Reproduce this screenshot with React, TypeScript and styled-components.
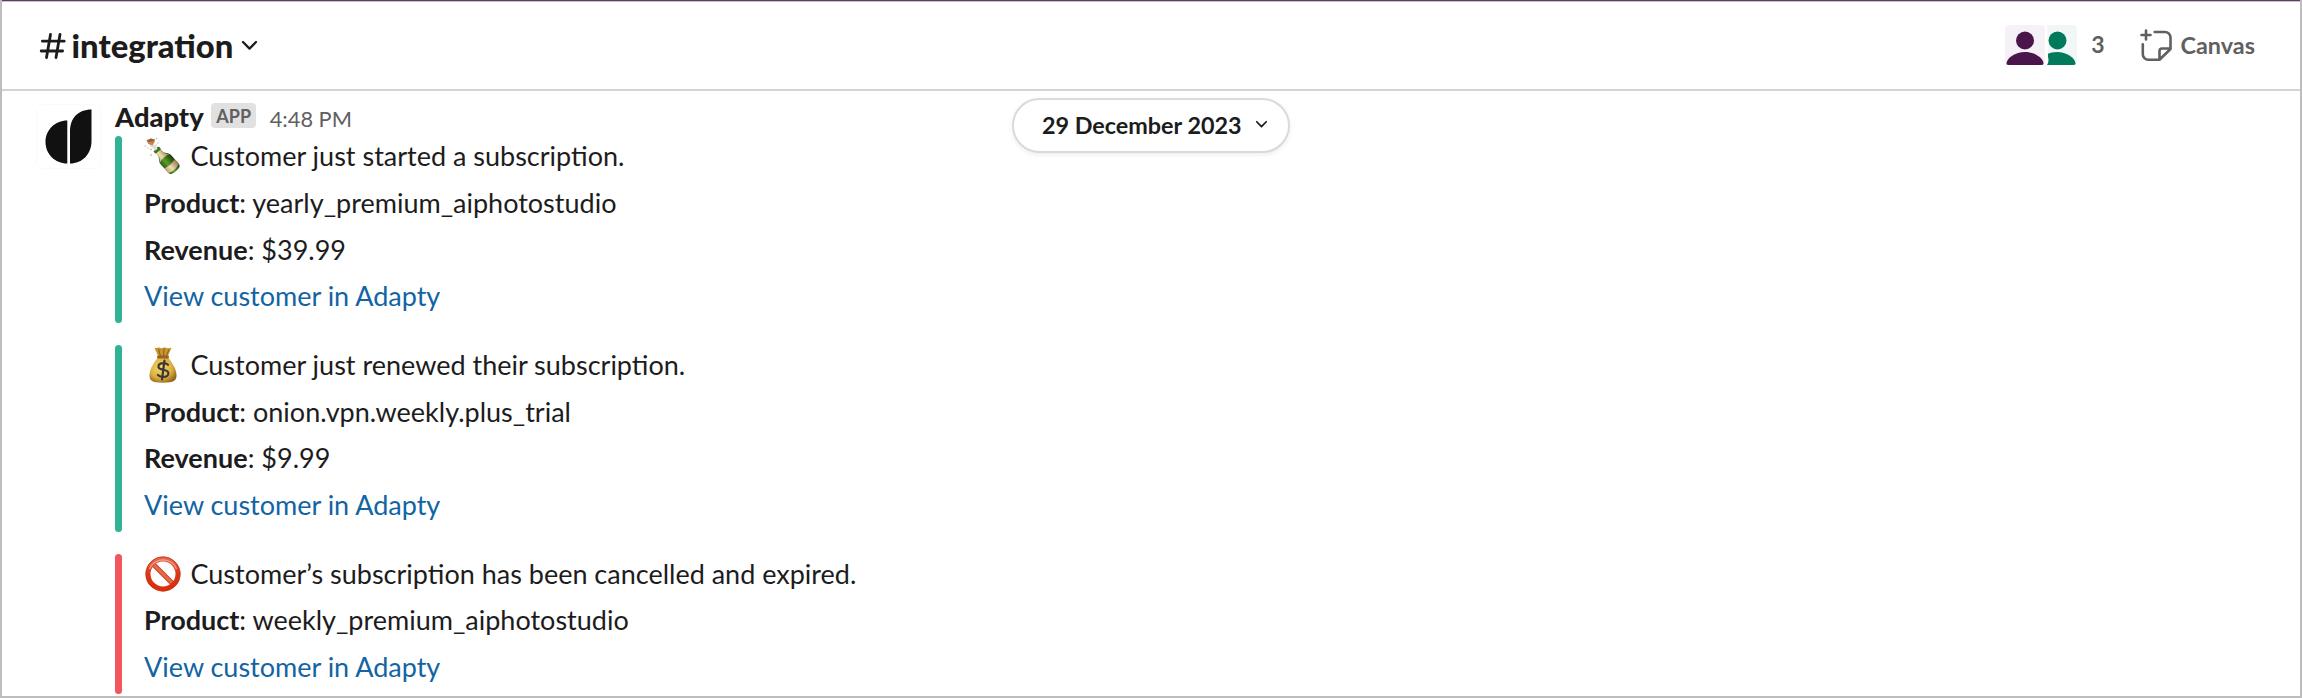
import React from "react";
import styled, { createGlobalStyle } from "styled-components";

const GlobalStyle = createGlobalStyle`
  *, *::before, *::after { box-sizing: border-box; }
  body { margin: 0; background: #fff; }
`;

const Window = styled.div`
  position: relative;
  display: flex;
  flex-direction: column;
  width: 2302px;
  height: 698px;
  overflow: hidden;
  border: 2px solid #bdbdbd;
  border-top: 0;
  background: #fff;
  color: #1d1c1d;
  font-family: Lato, "Liberation Sans", sans-serif;
`;

const TopEdge = styled.div`
  flex: none;
  height: 2px;
  margin: 0 -2px;
  background: linear-gradient(#5b3f5c 0 1px, #cabfcb 1px 2px);
`;

const Header = styled.header`
  flex: none;
  display: flex;
  align-items: center;
  justify-content: space-between;
  height: 89px;
  padding: 0 45px 0 37px;
  border-bottom: 2px solid #d4d4d4;
`;

const ChannelTitle = styled.h1`
  display: flex;
  align-items: center;
  margin: 0;
  font-size: 32.8px;
  font-weight: 900;
  line-height: 40px;
`;

const HashIcon = styled.svg`
  width: 27px;
  height: 28px;
  margin: 1px 5.5px 0 0;
`;

const Chevron = styled.svg<{ $width: number; $gap: number }>`
  width: ${(p) => p.$width}px;
  height: ${(p) => p.$width * 0.6}px;
  margin-left: ${(p) => p.$gap}px;
  overflow: visible;
`;

const HeaderActions = styled.div`
  display: flex;
  align-items: center;
  color: #616061;
`;

const AvatarStack = styled.svg`
  width: 72px;
  height: 40px;
  margin-top: -1px;
`;

const MemberCount = styled.span`
  margin: -3px 0 0 14px;
  font-size: 23px;
  font-weight: 700;
  line-height: 30px;
`;

const CanvasIcon = styled.svg`
  width: 32px;
  height: 32px;
  margin: -1px 0 0 35px;
`;

const CanvasLabel = styled.span`
  margin: -2px 0 0 9px;
  font-size: 23.4px;
  font-weight: 700;
  line-height: 30px;
`;

const DatePill = styled.button`
  position: absolute;
  top: 98px;
  left: 1010px;
  display: flex;
  align-items: center;
  width: 278px;
  height: 55px;
  padding: 0 0 2px 28px;
  border: 2px solid #dadada;
  border-radius: 28px;
  background: #fff;
  box-shadow: 0 2px 5px rgba(0, 0, 0, 0.07);
  color: #1d1c1d;
  font: 700 23.35px/30px Lato, sans-serif;
`;

const Message = styled.article`
  display: flex;
  padding: 11px 0 0 34px;
`;

const AppAvatar = styled.svg`
  flex: none;
  width: 65px;
  height: 65px;
  margin-top: 2px;
`;

const MessageBody = styled.div`
  padding-left: 14px;
`;

const MessageMeta = styled.div`
  display: flex;
  align-items: center;
  height: 34px;
`;

const Author = styled.span`
  margin-top: -4px;
  font-size: 27.3px;
  font-weight: 900;
  line-height: 34px;
`;

const AppBadge = styled.span`
  width: 45px;
  height: 25px;
  margin: -7px 0 0 7.500px;
  border-radius: 4px;
  background: #e1e1e1;
  color: #616061;
  font-size: 18px;
  font-weight: 700;
  line-height: 26px;
  text-align: center;
`;

const Time = styled.time`
  margin: 0 0 0 13.500px;
  color: #616061;
  font-size: 21.8px;
  line-height: 30px;
`;

const Attachments = styled.div`
  display: flex;
  flex-direction: column;
  gap: 22px;
`;

const Attachment = styled.section<{ $tone: string }>`
  display: flex;
  gap: 22px;

  &::before {
    content: "";
    width: 7px;
    border-radius: 4px;
    background: ${(p) => p.$tone};
  }
`;

const Lines = styled.div`
  display: flex;
  flex-direction: column;
`;

const Line = styled.div`
  display: flex;
  align-items: center;
  height: 46.7px;
  padding-bottom: 6.4px;
  font-size: 27px;
  line-height: 40px;
  white-space: pre;
`;

const Emoji = styled.svg`
  width: 38px;
  height: 38px;
  margin: 0 8.500px 0 0;
`;

const Link = styled.a`
  color: #1264a3;
  text-decoration: none;
`;

const GREEN = "#30b295";
const RED = "#f2555c";

type Kind = "bottle" | "money" | "prohibited";

const items: { kind: Kind; tone: string; title: string; product: string; revenue?: string }[] = [
  { kind: "bottle", tone: GREEN, title: "Customer just started a subscription.", product: "yearly_premium_aiphotostudio", revenue: "$39.99" },
  { kind: "money", tone: GREEN, title: "Customer just renewed their subscription.", product: "onion.vpn.weekly.plus_trial", revenue: "$9.99" },
  { kind: "prohibited", tone: RED, title: "Customer’s subscription has been cancelled and expired.", product: "weekly_premium_aiphotostudio" },
];

function Down({ width, gap }: { width: number; gap: number }) {
  return (
    <Chevron $width={width} $gap={gap} viewBox="0 0 15 9" fill="none" stroke="#1d1c1d" strokeWidth="2.3" strokeLinecap="round" strokeLinejoin="round">
      <path d="M1 1l6.5 6.6L14 1" />
    </Chevron>
  );
}

function BottleEmoji() {
  return (
    <Emoji viewBox="0 0 38 38">
      <defs>
        <linearGradient id="glass" x1="0" y1="0" x2="1" y2="0">
          <stop offset="0" stopColor="#2c5a14" />
          <stop offset=".4" stopColor="#5c9c2c" />
          <stop offset="1" stopColor="#16380a" />
        </linearGradient>
        <linearGradient id="foil" x1="0" y1="0" x2="1" y2="0">
          <stop offset="0" stopColor="#c3a673" />
          <stop offset=".4" stopColor="#efdcb2" />
          <stop offset="1" stopColor="#9a7c4a" />
        </linearGradient>
      </defs>
      <g transform="translate(14 14) rotate(-42)">
        <path d="M-3-3h6v6c0 3 4 5 4 9v11c0 3-2 4-7 4s-7-1-7-4V12c0-4 4-6 4-9z" fill="url(#glass)" />
        <path d="M-3-1h6v5c0 2.500 2 4 3.200 6-3-1.500-9.400-1.500-12.400 0 1.200-2 3.200-3.500 3.200-6z" fill="url(#foil)" />
        <path d="M-7 17c4 1.700 10 1.700 14 0v6.500c-4 1.800-10 1.800-14 0z" fill="url(#foil)" />
        <rect x="-3.700" y="-3" width="7.400" height="3.600" rx="1.200" fill="#39751b" />
      </g>
      <path d="M6 8l3-1 2 1 2-1-.5 3 1 2-3 2-1-3-3-1z" fill="#e2dfd5" />
      <path d="M2.500 3.500l4.500-2 4 1.200-.7 3-2 2.800-4-1.500z" fill="#c58655" />
      <path d="M2.500 3.500l4.500-2 4 1.200-2 1.500-4 .8z" fill="#9d6038" />
      <g fill="#c9bfae">
        <circle cx="1.500" cy="9" r=".8" /><circle cx="7" cy="12.500" r=".9" /><circle cx="12.500" cy="1.400" r=".8" />
        <circle cx="7" cy="18" r=".9" /><circle cx="14" cy="6" r=".7" /><circle cx="4" cy="11" r=".7" />
      </g>
    </Emoji>
  );
}

function MoneyEmoji() {
  return (
    <Emoji viewBox="0 0 38 38">
      <defs>
        <radialGradient id="sack" cx=".42" cy=".4" r=".65">
          <stop offset="0" stopColor="#f5d96a" />
          <stop offset=".65" stopColor="#dbb040" />
          <stop offset="1" stopColor="#94691d" />
        </radialGradient>
      </defs>
      <path d="M14 11.500h10c3 4 8 10 8.500 17 .3 6-2 8.200-13.500 8.200S5.200 34.500 5.500 28.500C6 21.500 11 15.500 14 11.500z" fill="url(#sack)" />
      <path d="M10.500 1.500c2 .8 3 .8 4.500-.2 2 1.200 3.500 1.200 5.500 0 2 1 4.500 1.200 7 .2-1 3.500-3 6-3.500 9.500H14c-.5-3.500-2.500-6-3.500-9.500z" fill="#c6962f" />
      <path d="M14.500 3l2 7M20 2.500l-.5 7.500M25 3.500L22.300 10" stroke="#87601c" strokeWidth="1" fill="none" />
      <rect x="13" y="9.500" width="12" height="3" rx="1.500" fill="#9a6120" />
      <path d="M24 18.800c-1.300-1.300-3-1.700-4.800-1.700-2.800 0-4.800 1.200-4.800 3.300 0 4.700 10 2 10 6.900 0 2.200-2 3.700-5.200 3.700-2 0-4-.7-5.300-2M20.500 14.500L18 33.500" fill="none" stroke="#3f3733" strokeWidth="2.200" strokeLinecap="round" />
    </Emoji>
  );
}

function ProhibitedEmoji() {
  return (
    <Emoji viewBox="0 0 38 38">
      <defs>
        <linearGradient id="ring" x1="0" y1="0" x2="0" y2="1">
          <stop offset="0" stopColor="#e5674b" />
          <stop offset=".5" stopColor="#dc3414" />
          <stop offset="1" stopColor="#d92f0c" />
        </linearGradient>
      </defs>
      <path d="M8.500 8.500l21 21" stroke="#cf3516" strokeWidth="4.800" />
      <path d="M8.500 8.500l21 21" stroke="#e86b50" strokeWidth="3" />
      <circle cx="19" cy="19" r="15" fill="none" stroke="url(#ring)" strokeWidth="5" />
      <circle cx="19" cy="19" r="17" fill="none" stroke="#c4371d" strokeWidth=".8" />
      <path d="M5.500 14a14.500 14.500 0 0 1 27 0" fill="none" stroke="#f3a591" strokeWidth="1.300" />
    </Emoji>
  );
}

const emojis = { bottle: BottleEmoji, money: MoneyEmoji, prohibited: ProhibitedEmoji };

export default function App() {
  return (
    <>
      <GlobalStyle />
      <Window>
        <TopEdge />
        <Header>
          <ChannelTitle>
            <HashIcon viewBox="0 0 27 28" fill="none" stroke="#1d1c1d" strokeWidth="2.8" strokeLinecap="round">
              <path d="M11.500 2.500L7.500 25.500M21 2.500L17 25.500M3.400 9.200h21.800M2.200 19h21.400" />
            </HashIcon>
            integration
            <Down width={15} gap={9} />
          </ChannelTitle>
          <HeaderActions>
            <AvatarStack viewBox="0 0 72 40">
              <defs>
                <clipPath id="front"><rect width="40" height="40" rx="4" /></clipPath>
                <clipPath id="back"><path d="M42 0h26a4 4 0 0 1 4 4v32a4 4 0 0 1-4 4H42c1.500-2 2-5 1-8z" /></clipPath>
              </defs>
              <g clipPath="url(#front)">
                <rect width="40" height="40" fill="#f6f1f6" />
                <circle cx="20" cy="15.500" r="9" fill="#4a154b" />
                <path d="M1.500 40c-1-6.500 8.500-13 18.500-13s19.500 6.500 18.500 13z" fill="#4a154b" />
              </g>
              <g clipPath="url(#back)">
                <rect x="32" width="40" height="40" fill="#f0f7f6" />
                <circle cx="52.500" cy="15.500" r="9" fill="#007a5a" />
                <path d="M33.500 40c-1-6.500 8.500-13 18.500-13s19.500 6.500 18.500 13z" fill="#007a5a" />
              </g>
            </AvatarStack>
            <MemberCount>3</MemberCount>
            <CanvasIcon viewBox="0 0 32 32" fill="none" stroke="#616061" strokeWidth="2.6" strokeLinecap="round" strokeLinejoin="round">
              <path d="M6 1.500v9M1.500 6h9M14.700 3H25a5.500 5.500 0 0 1 5.500 5.500V20L19.500 30.700H8.300a5.500 5.500 0 0 1-5.500-5.500V15.200M30.500 19.500H22a2.500 2.500 0 0 0-2.500 2.500v8.500" />
            </CanvasIcon>
            <CanvasLabel>Canvas</CanvasLabel>
          </HeaderActions>
        </Header>
        <Message>
          <AppAvatar viewBox="0 0 65 65">
            <rect x=".5" y=".5" width="64" height="64" rx="6" fill="#fff" stroke="#fafafa" />
            <path d="M31.300 16.500v43C19 59.500 9.500 50 9.500 38S19 16.500 31.300 16.500zM34 59.500V28C34 14 42 5.500 55.500 5.500V37c0 13-9 22.500-21.500 22.500z" fill="#111" />
          </AppAvatar>
          <MessageBody>
            <MessageMeta>
              <Author>Adapty</Author>
              <AppBadge>APP</AppBadge>
              <Time>4:48 PM</Time>
            </MessageMeta>
            <Attachments>
              {items.map((item) => {
                const Icon = emojis[item.kind];
                return (
                  <Attachment key={item.kind} $tone={item.tone}>
                    <Lines>
                      <Line><Icon />{item.title}</Line>
                      <Line><b>Product</b>: {item.product}</Line>
                      {item.revenue && <Line><b>Revenue</b>: {item.revenue}</Line>}
                      <Line><Link>View customer in Adapty</Link></Line>
                    </Lines>
                  </Attachment>
                );
              })}
            </Attachments>
          </MessageBody>
        </Message>
        <DatePill>29 December 2023<Down width={11} gap={14} /></DatePill>
      </Window>
    </>
  );
}
